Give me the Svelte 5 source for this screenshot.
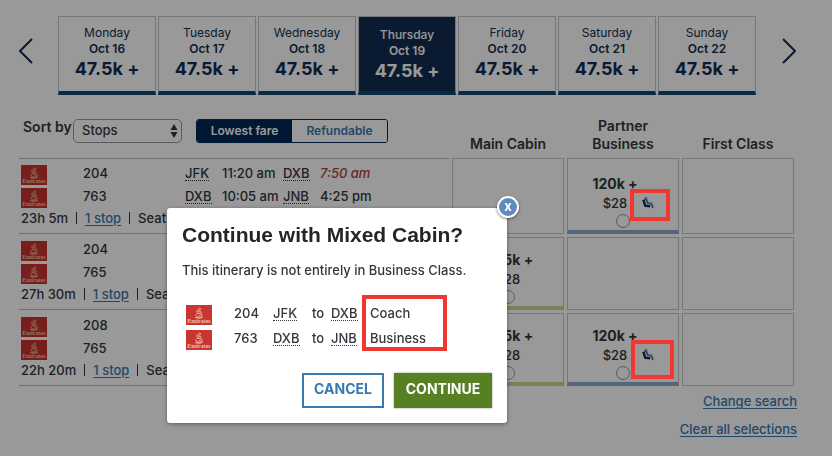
<script>
	const days = [
		{ name: 'Monday', date: 'Oct 16' },
		{ name: 'Tuesday', date: 'Oct 17' },
		{ name: 'Wednesday', date: 'Oct 18' },
		{ name: 'Thursday', date: 'Oct 19' },
		{ name: 'Friday', date: 'Oct 20' },
		{ name: 'Saturday', date: 'Oct 21' },
		{ name: 'Sunday', date: 'Oct 22' }
	];

	const flights = [
		{
			legs: [
				{ number: '204', from: 'JFK', departs: '11:20 am', to: 'DXB', arrives: '7:50 am', nextDay: true },
				{ number: '763', from: 'DXB', departs: '10:05 am', to: 'JNB', arrives: '4:25 pm' }
			],
			duration: '23h 5m',
			fares: [null, { miles: '120k +', mixed: true }, null]
		},
		{
			legs: [{ number: '204' }, { number: '765' }],
			duration: '27h 30m',
			fares: [{ miles: '47.5k +' }, null, null]
		},
		{
			legs: [{ number: '208' }, { number: '765' }],
			duration: '22h 20m',
			fares: [{ miles: '47.5k +' }, { miles: '120k +', mixed: true, large: true }, null]
		}
	];

	const cabins = [
		{ number: '204', from: 'JFK', to: 'DXB', cabin: 'Coach' },
		{ number: '763', from: 'DXB', to: 'JNB', cabin: 'Business' }
	];

	let selectedDay = $state('Thursday');
	let fareType = $state('lowest');
	let fare = $state('');
	let open = $state(true);

	function close() {
		open = false;
	}
</script>

{#snippet logo()}
	<svg class="logo" viewBox="0 0 26 20" role="img" aria-label="Emirates">
		<rect width="26" height="20" fill="#c93532" />
		<g fill="none" stroke="#f3c0a0" stroke-linecap="round">
			<path d="M13 3.200c1.500-.4 2.300.9 1.200 1.600s-3-.3-3.500.8 1.200 1.700 2.500 1.200 2.600 0 2 .9-2.600.9-4.200.6" stroke-width="1" />
			<path d="M10 9.800c-.4 1.700 1.400 2.600 3.400 2.400s3.600-1.300 2.800-2.400-2.600-.1-2.700.9M9.500 12.600c1.800.9 5 .7 6.800 0" stroke-width="1" />
		</g>
		<text x="13" y="17.500" text-anchor="middle">Emirates</text>
	</svg>
{/snippet}

<main>
	<nav class="calendar" aria-label="Departure date">
		<button class="arrow" aria-label="Previous days">
			<svg viewBox="0 0 14 26"><path d="M13 1 1 13l12 12" /></svg>
		</button>
		<div class="days">
			{#each days as day}
				<button
					class="day"
					class:selected={day.name === selectedDay}
					onclick={() => (selectedDay = day.name)}
				>
					<span>{day.name}</span>
					<b>{day.date}</b>
					<strong>47.5k +</strong>
				</button>
			{/each}
		</div>
		<button class="arrow" aria-label="Next days">
			<svg viewBox="0 0 14 26"><path d="m1 1 12 12L1 25" /></svg>
		</button>
	</nav>

	<table>
		<thead>
			<tr>
				<td>
					<div class="toolbar">
						<label for="sort">Sort by</label>
						<div class="select">
							<select id="sort">
								<option>Stops</option>
							</select>
							<svg viewBox="0 0 8 14"><path d="M4 0l3.500 6h-7zM4 14l3.500-6h-7z" /></svg>
						</div>
						<div class="toggle">
							<button class:active={fareType === 'lowest'} onclick={() => (fareType = 'lowest')}>
								Lowest fare
							</button>
							<button class:active={fareType === 'refundable'} onclick={() => (fareType = 'refundable')}>
								Refundable
							</button>
						</div>
					</div>
				</td>
				<th scope="col">Main Cabin</th>
				<th scope="col">Partner<br />Business</th>
				<th scope="col">First Class</th>
			</tr>
		</thead>
		<tbody>
			{#each flights as flight, row}
				<tr>
					<td class="flight">
						{#each flight.legs as leg}
							<div class="leg">
								{@render logo()}
								<span>{leg.number}</span>
								{#if leg.from}
									<span><abbr>{leg.from}</abbr></span>
									<span>{leg.departs}</span>
									<span><abbr>{leg.to}</abbr></span>
									<span class:next-day={leg.nextDay}>{leg.arrives}</span>
								{/if}
							</div>
						{/each}
						<div class="meta">
							<span>{flight.duration}</span>
							<i></i>
							<a href="#stops">1 stop</a>
							<i></i>
							<span>Seats</span>
						</div>
					</td>
					{#each flight.fares as item, col}
						<td>
							<div class="fare" class:main={item && !item.mixed} class:mixed={item?.mixed}>
								{#if item}
									<b>{item.miles}</b>
									<span class="price">
										$28
										{#if item.mixed}
											<svg class="seat" viewBox="0 0 12 12">
												<path d="M2.600 3 3.900 1.200 5.800 6.200 9.400 6.700 11 10.800" stroke="#507fae" stroke-width="2" />
												<path d="M1.400 2.800 3.200 8.600 8.200 9.400" stroke="#10284a" stroke-width="2.400" />
											</svg>
										{/if}
									</span>
									<input
										type="radio"
										name="fare"
										aria-label="{item.miles} $28"
										value="{row}-{col}"
										bind:group={fare}
									/>
									{#if item.mixed}
										<div class="highlight" class:large={item.large}></div>
									{/if}
								{/if}
							</div>
						</td>
					{/each}
				</tr>
			{/each}
		</tbody>
	</table>

	<div class="links">
		<a href="#search">Change search</a>
		<a href="#clear">Clear all selections</a>
	</div>
</main>

{#if open}
	<div class="overlay">
		<div class="modal" role="dialog" aria-modal="true" aria-labelledby="title">
			<button class="close" aria-label="Close" onclick={close}>x</button>
			<h2 id="title">Continue with Mixed Cabin?</h2>
			<p>This itinerary is not entirely in Business Class.</p>
			<div class="itinerary">
				<div class="segments">
					{#each cabins as segment}
						<div class="segment">
							{@render logo()}
							<span>{segment.number}</span>
							<span><abbr>{segment.from}</abbr></span>
							<span>to</span>
							<span><abbr>{segment.to}</abbr></span>
						</div>
					{/each}
				</div>
				<div class="cabins">
					{#each cabins as segment}
						<span>{segment.cabin}</span>
					{/each}
				</div>
			</div>
			<div class="actions">
				<button class="cancel" onclick={close}>CANCEL</button>
				<button class="continue" onclick={close}>CONTINUE</button>
			</div>
		</div>
	</div>
{/if}

<style>
	:global(body) {
		background: #fff;
	}

	main,
	.overlay {
		font-family: Inter, 'Liberation Sans', sans-serif;
		font-size: 13px;
		font-weight: 500;
		line-height: 16px;
		color: #32373d;
	}

	main {
		padding: 16px 35px 16px 16px;
	}

	button,
	select {
		font: inherit;
		cursor: pointer;
	}

	a {
		color: #3a78b0;
		text-underline-offset: 2px;
	}

	abbr {
		display: inline-block;
		line-height: 14px;
		border-bottom: 1px dotted #32373d;
	}

	/* Date strip */
	.calendar {
		display: flex;
		align-items: flex-start;
		padding: 0 1px 0 3px;
	}

	.arrow {
		width: 14px;
		padding: 0;
		margin-top: 22px;
		border: 0;
		background: none;
	}

	.arrow svg {
		display: block;
		width: 14px;
		height: 26px;
		fill: none;
		stroke: #112d52;
		stroke-width: 2;
	}

	.days {
		flex: 1;
		display: flex;
		gap: 2px;
		margin: 0 26px 0 25px;
	}

	.day {
		flex: 1;
		display: flex;
		flex-direction: column;
		align-items: center;
		height: 79px;
		padding: 8px 0 0;
		border: 1px solid #c6c6c6;
		border-bottom: 4px solid #124671;
		background: #fff;
		color: #112d52;
		font-size: 12px;
		font-weight: 400;
	}

	.day b {
		font-weight: 600;
	}

	.day strong {
		font-size: 18px;
		font-weight: 700;
		line-height: 24px;
	}

	.day.selected {
		padding-top: 10px;
		background: #112d52;
		color: #fff;
		font-weight: 500;
	}

	/* Results */
	table {
		width: 100%;
		table-layout: fixed;
		border-spacing: 3px 0;
	}

	td,
	th {
		padding: 0;
		vertical-align: top;
	}

	th {
		width: 112px;
		height: 63px;
		padding-bottom: 5px;
		box-sizing: border-box;
		vertical-align: bottom;
		font-size: 14px;
		font-weight: 600;
		line-height: 18px;
	}

	.toolbar {
		display: flex;
		padding: 24px 0 0 4px;
	}

	.toolbar label {
		width: 50px;
		font-size: 14px;
		font-weight: 600;
		white-space: nowrap;
	}

	.select {
		display: grid;
		align-items: center;
		width: 109px;
		margin-right: 14px;
	}

	.select select,
	.select svg {
		grid-area: 1 / 1;
	}

	.select select {
		height: 24px;
		padding: 0 8px 2px;
		border: 1px solid #999;
		border-radius: 5px;
		background: #fff;
		color: #32373d;
		font-size: 13px;
		appearance: none;
	}

	.select svg {
		justify-self: end;
		width: 8px;
		height: 14px;
		margin-right: 4px;
		fill: #32373d;
		pointer-events: none;
	}

	.toggle {
		display: flex;
		width: 192px;
		height: 24px;
		box-sizing: border-box;
		border: 1px solid #002855;
		border-radius: 3px;
		overflow: hidden;
	}

	.toggle button {
		flex: 1;
		padding: 0 0 1px;
		border: 0;
		background: #fff;
		color: #3a78b0;
		font-size: 12px;
		font-weight: 600;
	}

	.toggle button.active {
		background: #002855;
		color: #fff;
	}

	.flight {
		height: 76px;
		padding: 6px 2px 0;
		border: solid transparent;
		border-width: 1px 0;
		border-bottom-color: #bbb;
		box-sizing: border-box;
	}

	tr:first-child .flight {
		border-top-color: #bbb;
	}

	.leg {
		display: grid;
		grid-template-columns: 62px 102px 37px 61px 37px 1fr;
		height: 23px;
	}

	.logo {
		width: 26px;
		height: 20px;
	}

	.logo text {
		font: bold 6px 'Liberation Serif', serif;
		fill: #f3c0a0;
	}

	.next-day {
		color: #a84444;
		font-style: italic;
	}

	.meta {
		display: flex;
		align-items: center;
		gap: 8px;
		line-height: 14px;
	}

	.meta i {
		width: 1px;
		height: 12px;
		background: #32373d;
	}

	.fare {
		position: relative;
		display: flex;
		flex-direction: column;
		align-items: center;
		justify-content: flex-end;
		height: 73px;
		margin-top: 3px;
		padding-bottom: 2px;
		box-sizing: border-box;
		border: 1px solid #c6c6c6;
	}

	tr:first-child .fare {
		height: 76px;
		margin-top: 0;
	}

	.fare.main {
		border-bottom: 4px solid #c1d98c;
	}

	.fare.mixed {
		border-bottom: 4px solid #8eaac8;
	}

	.fare b {
		font-size: 14px;
		font-weight: 700;
		line-height: 20px;
	}

	.price {
		display: flex;
		align-items: center;
		line-height: 18px;
	}

	.mixed b,
	.mixed .price {
		padding-right: 16px;
	}

	.seat {
		width: 12px;
		height: 12px;
		margin: 0 -27px 0 15px;
		fill: none;
	}

	.fare input {
		width: 14px;
		height: 14px;
		margin: 2px 0 0;
		border: 1px solid #999;
		border-radius: 50%;
		appearance: none;
	}

	.fare input:checked {
		background: #3a78b0;
	}

	/* Callouts stay bright above the dimmed page */
	.highlight {
		position: absolute;
		z-index: 2;
		top: 30px;
		left: 62px;
		width: 32px;
		height: 24px;
		border: 4px solid #f03732;
	}

	.highlight.large {
		top: 26px;
		left: 63px;
		width: 35px;
		height: 31px;
	}

	.links {
		display: flex;
		flex-direction: column;
		align-items: flex-end;
		gap: 12px;
		padding-top: 7px;
	}

	/* Dialog */
	.overlay {
		position: fixed;
		inset: 0;
		z-index: 1;
		display: flex;
		align-items: flex-start;
		padding: 208px 0 0 167px;
		background: rgba(0, 0, 0, 0.4);
	}

	.modal {
		position: relative;
		width: 340px;
		padding: 14px 15px 15px;
		box-sizing: border-box;
		border-radius: 3px;
		background: #fff;
		box-shadow: 0 1px 4px rgba(0, 0, 0, 0.4);
	}

	.close {
		position: absolute;
		top: -12px;
		right: -12px;
		width: 22px;
		height: 22px;
		padding: 0 0 2px;
		border: 2px solid #fff;
		border-radius: 50%;
		background: #6189bd;
		color: #fff;
		font-weight: 700;
		line-height: 14px;
		box-shadow: 0 1px 3px rgba(0, 0, 0, 0.5);
	}

	h2 {
		margin: 0;
		font: bold 21px/26px 'Liberation Sans', Arial, sans-serif;
		color: #222629;
	}

	p {
		margin: 14px 0 17px;
	}

	.itinerary {
		display: flex;
	}

	.segments {
		width: 180px;
		padding: 10px 0 0 4px;
		box-sizing: border-box;
	}

	.segment {
		display: grid;
		grid-template-columns: 48px 39px 39px 19px 1fr;
		height: 25px;
	}

	.cabins {
		display: flex;
		flex-direction: column;
		gap: 9px;
		width: 85px;
		height: 56px;
		padding: 6px 4px 0;
		box-sizing: border-box;
		border: 4px solid #f03732;
	}

	.actions {
		display: flex;
		justify-content: flex-end;
		gap: 10px;
		margin-top: 18px;
	}

	.actions button {
		height: 35px;
		padding: 0 0 3px;
		font-size: 14px;
		font-weight: 700;
	}

	.cancel {
		width: 82px;
		border: 2px solid #3a78b0;
		background: #fff;
		color: #3a78b0;
	}

	.continue {
		width: 98px;
		border: 0;
		background: #568022;
		color: #fff;
		box-shadow: 0 0 2px rgba(0, 0, 0, 0.4);
	}
</style>
